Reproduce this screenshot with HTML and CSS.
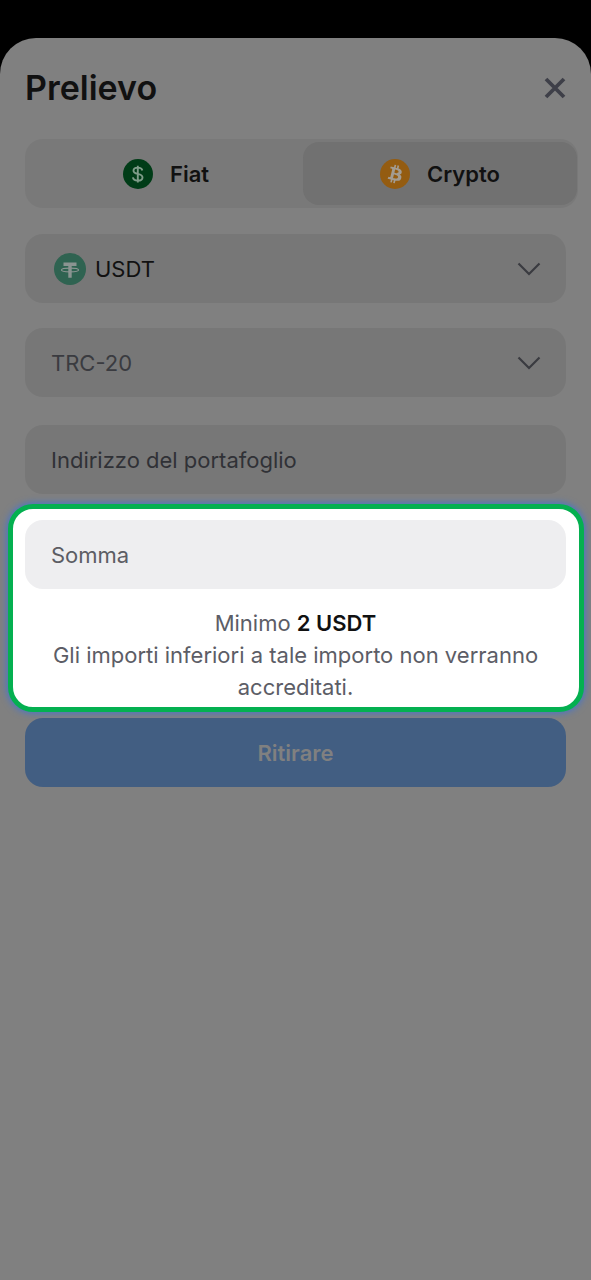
FILE: index.html
```html
<!DOCTYPE html>
<html lang="it">
<head>
<meta charset="utf-8">
<meta name="viewport" content="width=device-width, initial-scale=1">
<title>Prelievo</title>
<link rel="stylesheet" href="styles.css">
</head>
<body>
<main class="sheet">
  <header class="header">
    <h1 class="title">Prelievo</h1>
    <button class="close" type="button" aria-label="Chiudi">
      <svg width="22" height="22" viewBox="0 0 22 22" aria-hidden="true"><path d="M2 2l18 18M20 2L2 20" fill="none" stroke="currentColor" stroke-width="3.800"/></svg>
    </button>
  </header>

  <form class="form">
    <div class="tabs">
      <button class="tab" type="button" aria-pressed="false">
        <svg class="tab-icon" viewBox="0 0 30 30" aria-hidden="true">
          <circle cx="15" cy="15" r="15" fill="#003c17"/>
          <path d="M19.300 11.500c-.3-1.900-2-2.900-4.500-2.900-2.500 0-4.300 1.200-4.300 3.100 0 2 1.700 2.600 4.300 3.200 2.900.6 4.700 1.400 4.700 3.500 0 2-1.900 3.200-4.700 3.200-2.700 0-4.600-1.200-4.900-3.300M14.800 6.800v16.700" fill="none" stroke="#7f9c89" stroke-width="1.900"/>
        </svg>
        <span>Fiat</span>
      </button>
      <button class="tab tab-active" type="button" aria-pressed="true">
        <svg class="tab-icon" viewBox="0 0 32 32" aria-hidden="true">
          <circle cx="16" cy="16" r="16" fill="#945c11"/>
          <path fill="#a39c92" d="M23.189 14.020c.314-2.096-1.283-3.223-3.465-3.975l.708-2.840-1.728-.43-.690 2.765c-.454-.114-.920-.220-1.385-.326l.695-2.783L15.596 6l-.708 2.839c-.376-.086-.746-.170-1.104-.260l.002-.009-2.384-.595-.460 1.846s1.283.294 1.256.312c.700.175.826.638.805 1.006l-.806 3.235c.048.012.110.030.180.057l-.183-.045-1.130 4.532c-.086.212-.303.531-.793.410.018.025-1.256-.313-1.256-.313l-.858 1.978 2.250.561c.418.105.828.215 1.231.318l-.715 2.872 1.727.430.708-2.840c.472.127.930.245 1.378.357l-.706 2.828 1.728.430.715-2.866c2.948.558 5.164.333 6.097-2.333.752-2.146-.037-3.385-1.588-4.192 1.130-.260 1.980-1.003 2.207-2.538zm-3.950 5.538c-.533 2.147-4.148.986-5.320.695l.950-3.805c1.172.293 4.929.872 4.370 3.110zm.535-5.569c-.487 1.953-3.495.960-4.470.717l.860-3.450c.975.243 4.118.696 3.610 2.733z"/>
        </svg>
        <span>Crypto</span>
      </button>
    </div>

    <div class="field">
      <svg class="coin" viewBox="0 0 32 32" aria-hidden="true">
        <circle cx="16" cy="16" r="16" fill="#2f6351"/>
        <path fill="#8b9491" d="M9.500 9.500h13v3.500h-4.800v11.700h-3.400V13H9.500z"/>
        <ellipse cx="16" cy="17" rx="8.600" ry="1.900" fill="none" stroke="#8b9491" stroke-width="1.100"/>
      </svg>
      <select class="select select-currency" aria-label="Valuta"><option>USDT</option></select>
      <svg class="chevron" viewBox="0 0 24 14" aria-hidden="true"><path d="M1.500 1.500l10.500 10.500 10.500-10.500" fill="none" stroke="currentColor" stroke-width="2.200"/></svg>
    </div>

    <div class="field">
      <select class="select" aria-label="Rete"><option>TRC-20</option></select>
      <svg class="chevron" viewBox="0 0 24 14" aria-hidden="true"><path d="M1.500 1.500l10.500 10.500 10.500-10.500" fill="none" stroke="currentColor" stroke-width="2.200"/></svg>
    </div>

    <div class="field field-address">
      <input class="input" type="text" aria-label="Indirizzo del portafoglio" placeholder="Indirizzo del portafoglio">
    </div>

    <section class="spotlight">
      <div class="field field-amount">
        <input class="input" type="text" inputmode="decimal" aria-label="Somma" placeholder="Somma" aria-describedby="minimum">
      </div>
      <p class="note" id="minimum">Minimo <strong>2 USDT</strong><br>Gli importi inferiori a tale importo non verranno accreditati.</p>
    </section>

    <button class="submit" type="submit">Ritirare</button>
  </form>
</main>
</body>
</html>
```
FILE: styles.css
```css
* {
  box-sizing: border-box;
}

body {
  margin: 0;
  padding-top: 38px;
  min-height: 100vh;
  display: flex;
  flex-direction: column;
  background: #000;
  font-family: Inter, "Liberation Sans", sans-serif;
  font-size: 22px;
  color: #111;
}

button,
input,
select {
  font: inherit;
  color: inherit;
  border: 0;
  margin: 0;
  padding: 0;
  background: none;
}

.sheet {
  flex: 1;
  padding: 28px 25px 40px;
  background: #808080;
  border-radius: 36px 36px 0 0;
}

.header {
  display: flex;
  align-items: center;
  justify-content: space-between;
  height: 44px;
  margin-bottom: 29px;
}

.title {
  margin: 0;
  font-size: 34px;
  line-height: 44px;
  font-weight: 600;
}

.close {
  display: flex;
  color: #3e3f48;
}

.form {
  display: flex;
  flex-direction: column;
}

.tabs {
  display: grid;
  grid-template-columns: 1fr 1fr;
  height: 69px;
  margin: 0 -12px 26px 0;
  padding: 3px 1px 3px 4px;
  background: #797979;
  border-radius: 18px;
}

.tab {
  display: flex;
  align-items: center;
  justify-content: center;
  gap: 17px;
  border-radius: 16px;
  font-weight: 600;
}

.tab-active {
  background: #717171;
}

.tab-icon {
  width: 30px;
  height: 30px;
}

.field {
  display: flex;
  align-items: center;
  height: 69px;
  margin-bottom: 25px;
  padding: 0 25px 0 26px;
  background: #777;
  border-radius: 18px;
  color: #3a3b40;
}

.coin {
  width: 32px;
  height: 32px;
  margin: 0 9px 0 3px;
}

.select {
  flex: 1;
  min-width: 0;
  appearance: none;
}

.select-currency {
  color: #111;
}

.chevron {
  width: 24px;
  height: 14px;
}

.input {
  flex: 1;
  min-width: 0;
  height: 32px;
}

.input::placeholder {
  color: inherit;
  opacity: 1;
}

.field-address {
  margin: 3px 0 10px;
  color: #303136;
}

.spotlight {
  margin: 0 -18px 6px -17px;
  padding: 11px 13px 4px 12px;
  background: #fff;
  border: 5px solid #04b050;
  border-radius: 25px;
  box-shadow: 0 0 7px 1px #4474cc;
}

.field-amount {
  margin: 0;
  background: #eeeef0;
  color: #5c5d64;
}

.note {
  margin: 18px 0 0;
  padding: 0 20px;
  line-height: 32px;
  text-align: center;
  color: #5c5d66;
}

.note strong {
  font-weight: 600;
  color: #111;
}

.submit {
  height: 69px;
  background: #425e82;
  border-radius: 18px;
  font-weight: 600;
  color: #808080;
}
```
